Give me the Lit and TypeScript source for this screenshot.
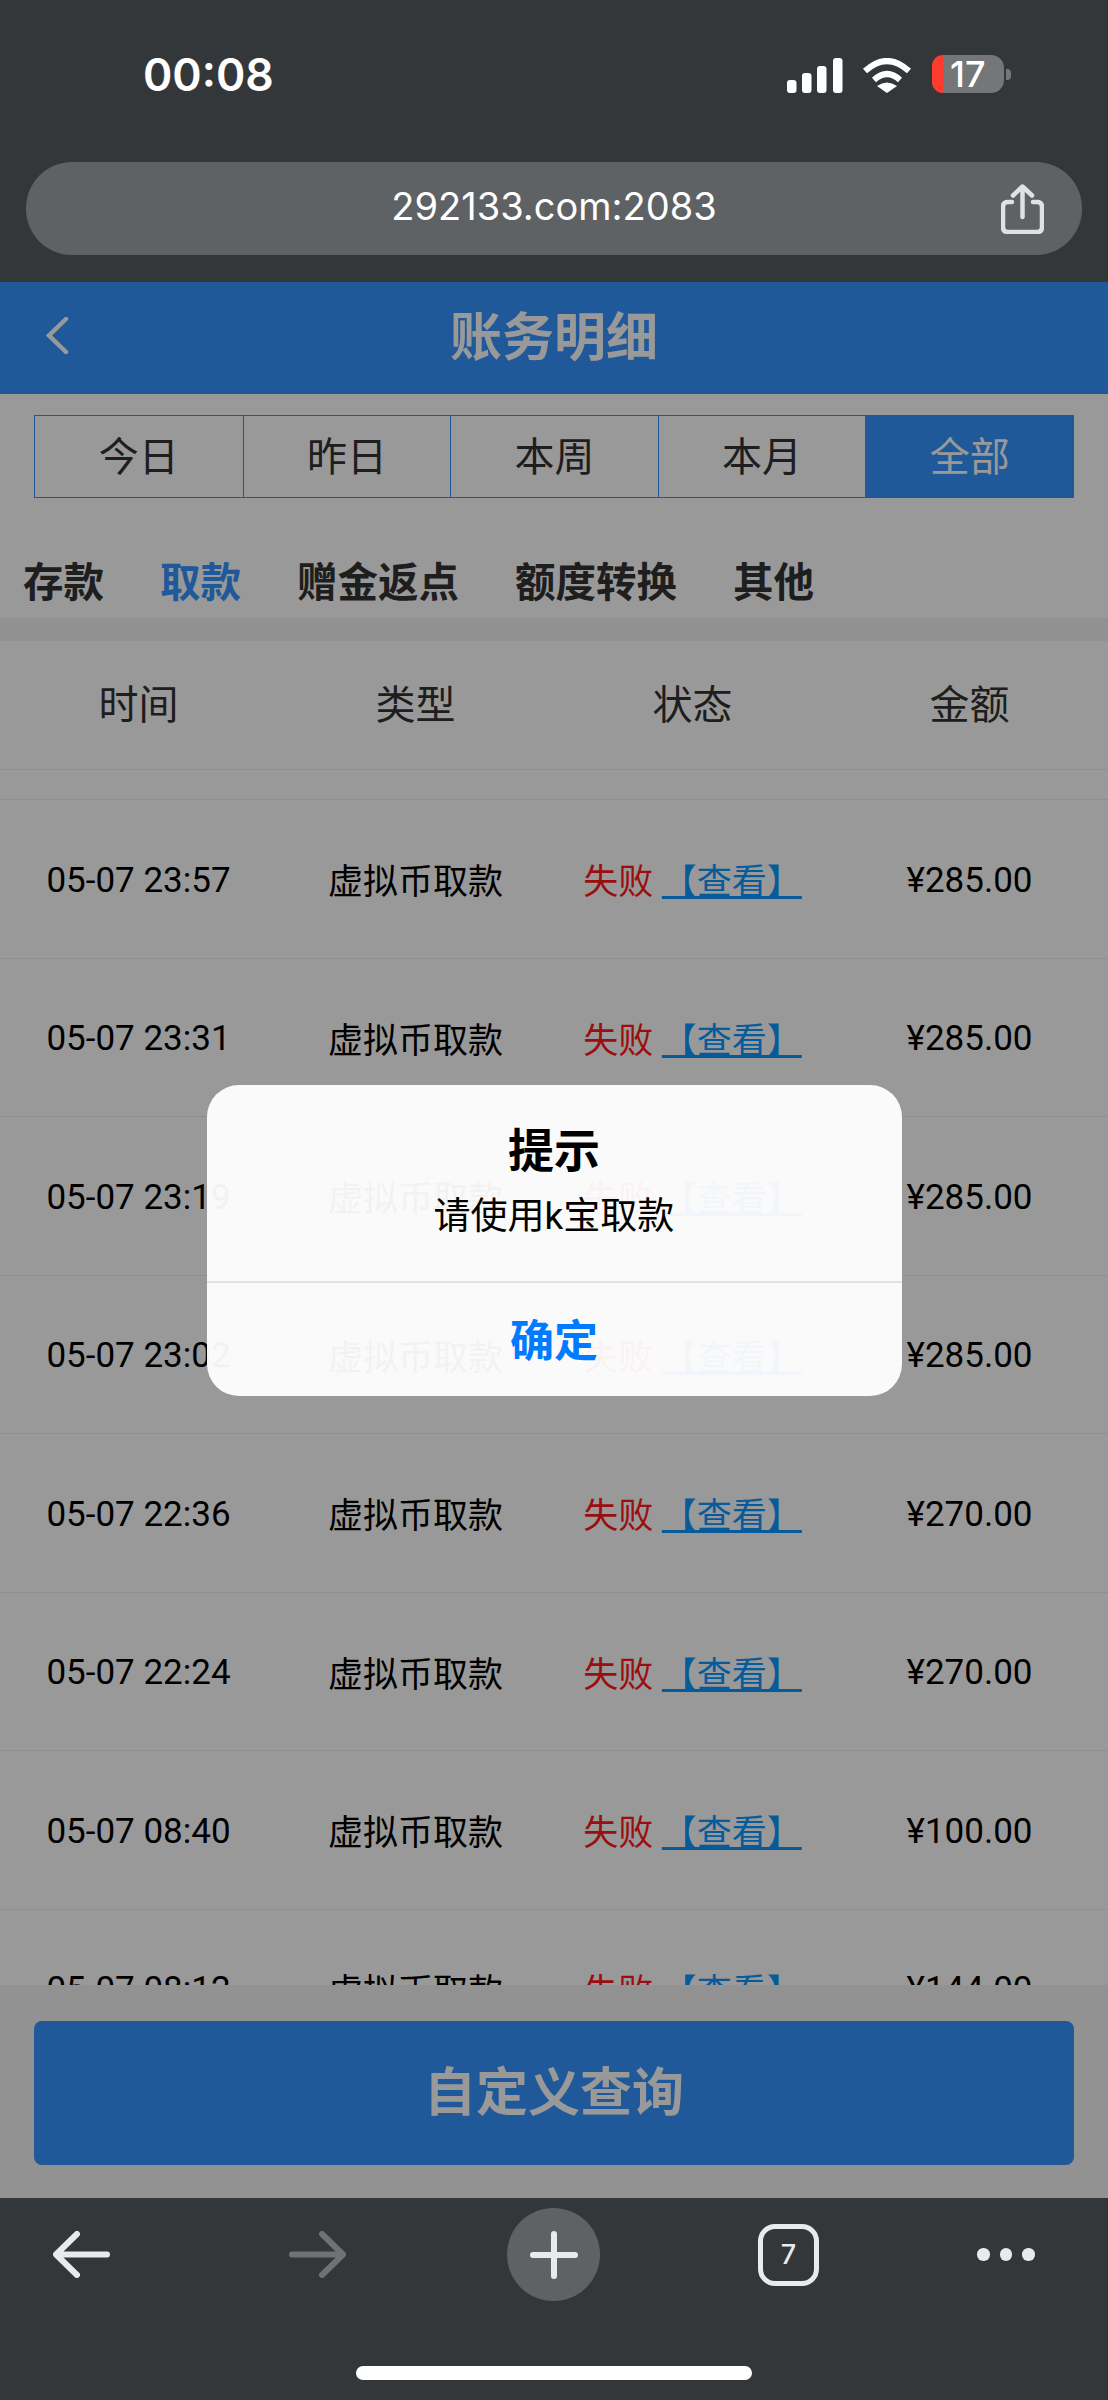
import { LitElement, html, css } from "lit";
import { customElement } from "lit/decorators.js";

const periods = ["今日", "昨日", "本周", "本月", "全部"];
const kinds = ["存款", "取款", "赠金返点", "额度转换", "其他"];
const columns = ["时间", "类型", "状态", "金额"];
const rows = [
  ["05-07 23:57", "285.00"],
  ["05-07 23:31", "285.00"],
  ["05-07 23:19", "285.00"],
  ["05-07 23:02", "285.00"],
  ["05-07 22:36", "270.00"],
  ["05-07 22:24", "270.00"],
  ["05-07 08:40", "100.00"],
  ["05-07 08:12", "144.00"],
];

@customElement("app-root")
export class AppRoot extends LitElement {
  static override styles = css`
    :host {
      display: block;
      width: 1108px;
      height: 2400px;
      overflow: hidden;
      font-family: Roboto, "Noto Sans CJK SC", sans-serif;
      color: #000;
      background: #fff;
    }
    .screen {
      display: flex;
      flex-direction: column;
      height: 2400px;
    }

    /* browser chrome */
    .chrome-top {
      height: 282px;
      flex: none;
      background: #34373a;
      box-sizing: border-box;
    }
    .status {
      height: 162px;
      display: flex;
      justify-content: space-between;
      align-items: flex-start;
      padding: 55px 97px 0 143px;
      box-sizing: border-box;
      color: #fff;
    }
    .clock {
      font: 600 44.5px/40px Inter, sans-serif;
    }
    .indicators {
      display: flex;
      align-items: center;
    }
    .signal {
      margin-top: 2px;
      margin-right: 19px;
      display: block;
    }
    .wifi {
      margin-top: 2px;
      margin-right: 20px;
      display: block;
    }
    .battery {
      position: relative;
      width: 72px;
      height: 38px;
      border-radius: 13px;
      background: #757678;
      font: 500 36px/38px Inter, sans-serif;
      padding-left: 18px;
      box-sizing: border-box;
    }
    .battery::before {
      content: "";
      position: absolute;
      left: 0;
      top: 0;
      bottom: 0;
      width: 11px;
      border-radius: 13px 0 0 13px;
      background: #ff3b30;
    }
    .cap {
      width: 5px;
      height: 11px;
      margin-left: 2px;
      background: #757678;
      border-radius: 0 4px 4px 0;
    }
    .url {
      margin: 0 26px;
      height: 93px;
      border-radius: 46px;
      background: #5e6265;
      display: grid;
      grid-template-columns: 1fr auto 1fr;
      align-items: center;
      color: #fff;
      font: 400 38px/93px Inter, sans-serif;
    }
    .url span {
      grid-column: 2;
      position: relative;
      top: -2px;
    }
    .share {
      grid-column: 3;
      justify-self: end;
      margin-right: 38px;
      display: block;
    }

    /* page */
    .content {
      position: relative;
      flex: 1;
      min-height: 0;
      display: flex;
      flex-direction: column;
      background: #fff;
      overflow: hidden;
    }
    .bar {
      height: 112px;
      flex: none;
      display: flex;
      align-items: center;
      justify-content: center;
      position: relative;
      background: #3494ff;
      color: #fff;
      font-size: 52px;
      font-weight: 700;
    }
    .bar svg {
      position: absolute;
      left: 46px;
      top: 35px;
    }
    .bar span {
      position: relative;
      top: -5px;
    }
    .periods {
      flex: none;
      margin: 21px 34px 0;
      height: 83px;
      box-sizing: border-box;
      display: grid;
      grid-template-columns: repeat(5, 1fr);
      border: 1px solid #3494ff;
    }
    .period {
      display: flex;
      align-items: center;
      justify-content: center;
      padding-bottom: 6px;
      border-left: 1px solid #3494ff;
      font-size: 40px;
      color: #333;
    }
    .period:first-child {
      border-left: none;
    }
    .period.on {
      background: #3494ff;
      color: #fff;
    }
    .kinds {
      flex: none;
      height: 120px;
      box-sizing: border-box;
      padding: 42px 0 0 23px;
      display: flex;
      align-items: center;
      gap: 56px;
      font-size: 40.5px;
      font-weight: 700;
      color: #333;
    }
    .kind.on {
      color: #3494ff;
    }
    .strip {
      flex: none;
      height: 23px;
      background: #f2f2f2;
    }
    .head,
    .row {
      display: grid;
      grid-template-columns: repeat(4, 277px);
      align-items: center;
      justify-items: center;
      border-bottom: 1px solid #eee;
      box-sizing: border-box;
    }
    .head {
      flex: none;
      height: 129px;
      padding-bottom: 6px;
      font-size: 40px;
      color: #333;
    }
    .list {
      flex: 1;
      min-height: 0;
      overflow: hidden;
    }
    .peek {
      height: 30px;
      border-bottom: 1px solid #eee;
      box-sizing: border-box;
    }
    .row {
      height: 158.5px;
      font-size: 35px;
    }
    .num {
      padding-top: 3px;
    }
    .fail {
      color: #ff1a1a;
    }
    .link {
      color: #0c98ff;
      text-decoration: underline;
      text-decoration-thickness: 3px;
    }
    .foot {
      flex: none;
      height: 213px;
      box-sizing: border-box;
      padding: 36px 34px 0;
      background: #f4f4f4;
    }
    .query {
      height: 144px;
      box-sizing: border-box;
      padding-bottom: 10px;
      border-radius: 8px;
      background: #3494ff;
      color: #fff;
      display: flex;
      align-items: center;
      justify-content: center;
      font-size: 52px;
      font-weight: 700;
    }
    .scrim {
      position: absolute;
      inset: 0;
      background: rgba(0, 0, 0, 0.4);
      display: flex;
      align-items: center;
      justify-content: center;
    }
    .dialog {
      width: 695px;
      height: 311px;
      border-radius: 32px;
      background: rgba(255, 255, 255, 0.95);
      display: flex;
      flex-direction: column;
      text-align: center;
    }
    .body {
      height: 198px;
      box-sizing: border-box;
      padding-top: 36px;
      border-bottom: 2px solid #e2e2e2;
    }
    .title {
      font-size: 46px;
      line-height: 60px;
      font-weight: 700;
    }
    .msg {
      margin-top: 13px;
      font-size: 37px;
      line-height: 46px;
    }
    .ok {
      flex: 1;
      display: flex;
      align-items: center;
      justify-content: center;
      padding-bottom: 2px;
      color: #007aff;
      font-size: 44px;
      font-weight: 700;
    }

    /* bottom toolbar */
    .chrome-bottom {
      flex: none;
      height: 202px;
      background: #34373a;
      position: relative;
    }
    .tools {
      display: flex;
      align-items: center;
      height: 93px;
      padding: 10px 0 0 53px;
      gap: 158px;
    }
    .tools svg {
      display: block;
    }
    .back {
      margin-right: 21px;
    }
    .fwd {
      margin-right: 2px;
    }
    .plus {
      width: 93px;
      height: 93px;
      border-radius: 50%;
      background: #5e6265;
      display: flex;
      align-items: center;
      justify-content: center;
    }
    .count {
      width: 61px;
      height: 62px;
      box-sizing: border-box;
      border: 5px solid #e8eaec;
      border-radius: 17px;
      display: flex;
      align-items: center;
      justify-content: center;
      color: #e8eaec;
      font: 500 27px/1 Inter, sans-serif;
    }
    .dots {
      display: flex;
      gap: 10px;
    }
    .dots i {
      width: 12.5px;
      height: 12.5px;
      border-radius: 50%;
      background: #e8eaec;
    }
    .home {
      position: absolute;
      left: 356px;
      top: 168px;
      width: 396px;
      height: 14px;
      border-radius: 7px;
      background: #fff;
    }
  `;

  override render() {
    return html`
      <div class="screen">
        <div class="chrome-top">
          <div class="status">
            <div class="clock">00:08</div>
            <div class="indicators">
              <svg class="signal" width="56" height="35" viewBox="0 0 56 35" fill="#fff">
                <rect x="0" y="22" width="9.5" height="13" rx="3" />
                <rect x="15" y="15" width="9.5" height="20" rx="3" />
                <rect x="30" y="8" width="9.5" height="27" rx="3" />
                <rect x="46" y="0" width="9.5" height="35" rx="3" />
              </svg>
              <svg class="wifi" width="50" height="35" viewBox="0 0 50 35" fill="none" stroke="#fff" stroke-width="6">
                <path d="M3 13Q25 -7 47 13" />
                <path d="M12 22Q25 10 38 22" />
                <path d="M25 35L15 28Q25 21 35 28Z" fill="#fff" stroke="none" />
              </svg>
              <div class="battery">17</div>
              <div class="cap"></div>
            </div>
          </div>
          <div class="url">
            <span>292133.com:2083</span>
            <svg class="share" width="43" height="50" viewBox="0 0 43 50" fill="none" stroke="#dfe2e5" stroke-width="4.5" stroke-linecap="round" stroke-linejoin="round">
              <path d="M11 18H7Q2 18 2 23V43Q2 48 7 48H36Q41 48 41 43V23Q41 18 36 18H32" />
              <path d="M21.500 33V3M12 11.500L21.500 2.500L31 11.500" />
            </svg>
          </div>
        </div>

        <div class="content">
          <div class="bar">
            <svg width="23" height="37" viewBox="0 0 23 37" fill="none" stroke="#fff" stroke-width="4.500" stroke-linecap="round">
              <path d="M20 2L3 18.500L20 35" />
            </svg>
            <span>账务明细</span>
          </div>
          <div class="periods">
            ${periods.map(
              (p, i) => html`<div class="period ${i === 4 ? "on" : ""}">${p}</div>`
            )}
          </div>
          <div class="kinds">
            ${kinds.map(
              (k, i) => html`<div class="kind ${i === 1 ? "on" : ""}">${k}</div>`
            )}
          </div>
          <div class="strip"></div>
          <div class="head">
            ${columns.map((c) => html`<div>${c}</div>`)}
          </div>
          <div class="list">
            <div class="peek"></div>
            ${rows.map(
              (r) => html`
                <div class="row">
                  <div class="num">${r[0]}</div>
                  <div>虚拟币取款</div>
                  <div><span class="fail">失败</span> <span class="link">【查看】</span></div>
                  <div class="num">¥${r[1]}</div>
                </div>
              `
            )}
          </div>
          <div class="foot">
            <div class="query">自定义查询</div>
          </div>
          <div class="scrim">
            <div class="dialog">
              <div class="body">
                <div class="title">提示</div>
                <div class="msg">请使用k宝取款</div>
              </div>
              <div class="ok">确定</div>
            </div>
          </div>
        </div>

        <div class="chrome-bottom">
          <div class="tools">
            <svg class="back" width="57" height="47" viewBox="0 0 57 47" fill="none" stroke="#e8eaec" stroke-width="6" stroke-linecap="round" stroke-linejoin="round">
              <path d="M54 23.500H4M24 3L3 23.500L24 44" />
            </svg>
            <svg class="fwd" width="58" height="47" viewBox="0 0 58 47" fill="none" stroke="#6f7173" stroke-width="6" stroke-linecap="round" stroke-linejoin="round">
              <path d="M3 23.500H53M33 3L54 23.500L33 44" />
            </svg>
            <div class="plus">
              <svg width="48" height="48" viewBox="0 0 48 48" fill="none" stroke="#e8eaec" stroke-width="6" stroke-linecap="round">
                <path d="M3 24H45M24 3V45" />
              </svg>
            </div>
            <div class="count">7</div>
            <div class="dots"><i></i><i></i><i></i></div>
          </div>
          <div class="home"></div>
        </div>
      </div>
    `;
  }
}
